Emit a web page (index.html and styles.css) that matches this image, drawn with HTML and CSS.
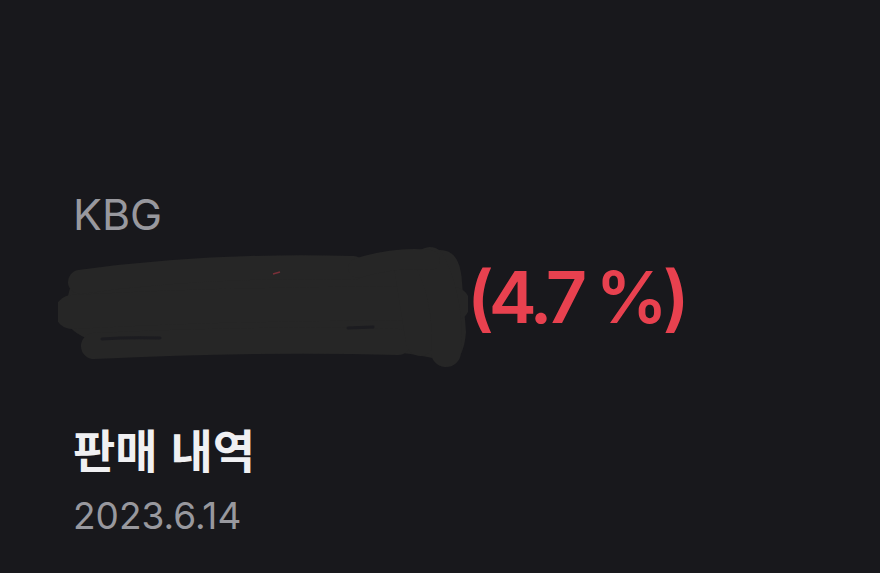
FILE: index.html
```html
<!DOCTYPE html>
<html lang="ko">

<head>
    <meta charset="UTF-8">
    <meta name="viewport" content="width=device-width, initial-scale=1.0">
    <title>판매 내역</title>
    <link rel="stylesheet" href="styles.css">
</head>

<body>

    <div class="screen">

        <!-- 상단: 종목 이름 + 수익률 -->
        <div class="stock">
            <p class="ticker">KBG</p>
            <div class="price-row">
                <svg class="scribble" width="410" height="128" viewBox="0 0 410 128">
                    <path d="M 20 32 Q 150 18 300 20 Q 350 6 380 8 Q 402 6 404 40 L 408 90 Q 406 116 394 120 Q 350 110 300 106 Q 150 110 40 116 Q 24 110 28 96 Q 4 86 8 66 Q 10 44 20 32 Z" fill="#262626" />
                    <g fill="none" stroke="#262626" stroke-linecap="round" stroke-linejoin="round">
                        <path d="M 22 40 Q 150 22 295 26" stroke-width="24" />
                        <path d="M 14 70 Q 200 60 395 62" stroke-width="34" />
                        <path d="M 36 104 Q 200 96 340 100" stroke-width="26" />
                        <path d="M 350 24 L 362 100" stroke-width="28" />
                        <path d="M 372 20 Q 392 60 388 110" stroke-width="30" />
                        <path d="M 300 26 Q 340 14 372 18" stroke-width="20" />
                    </g>
                    <path d="M 44 97 Q 70 95 102 96" stroke="#1c1c20" stroke-width="3" fill="none" stroke-linecap="round" />
                    <path d="M 290 86 L 315 85" stroke="#1c1c20" stroke-width="3" fill="none" stroke-linecap="round" />
                    <path d="M 215 32 L 222 30" stroke="#7a3038" stroke-width="1.5" fill="none" />
                </svg>
                <span class="rate">(4.7&nbsp;%)</span>
            </div>
        </div>

        <!-- 하단: 판매 내역 -->
        <div class="history">
            <h2 class="title">판매 내역</h2>
            <p class="date">2023.6.14</p>
        </div>

    </div>

</body>

</html>
```

FILE: styles.css
```css
body {
    margin: 0;
    background-color: #18181c;
    font-family: Inter, "Noto Sans CJK KR", sans-serif;
}

.screen {
    display: flex;
    flex-direction: column;
    padding: 190px 0 0 73px;
    height: 573px;
    box-sizing: border-box;
    overflow: hidden;
}

.ticker {
    margin: 0;
    font-size: 43px;
    line-height: 48px;
    color: #98989e;
}

.price-row {
    display: flex;
    align-items: flex-start;
    margin-left: -15px;
    margin-top: 4px;
}

.scribble {
    display: block;
    flex: none;
}

.rate {
    margin: 19px 0 0 -1px;
    font-size: 72px;
    line-height: 1;
    font-weight: 600;
    color: #e8414f;
    letter-spacing: -5px;
}

.history {
    margin-top: 50px;
}

.title {
    margin: 0;
    font-family: "Noto Sans CJK KR", sans-serif;
    font-size: 46px;
    font-weight: bold;
    line-height: 56px;
    color: #f0f0f2;
}

.date {
    margin: 18px 0 0;
    font-size: 37px;
    line-height: 44px;
    color: #98989e;
}
```
